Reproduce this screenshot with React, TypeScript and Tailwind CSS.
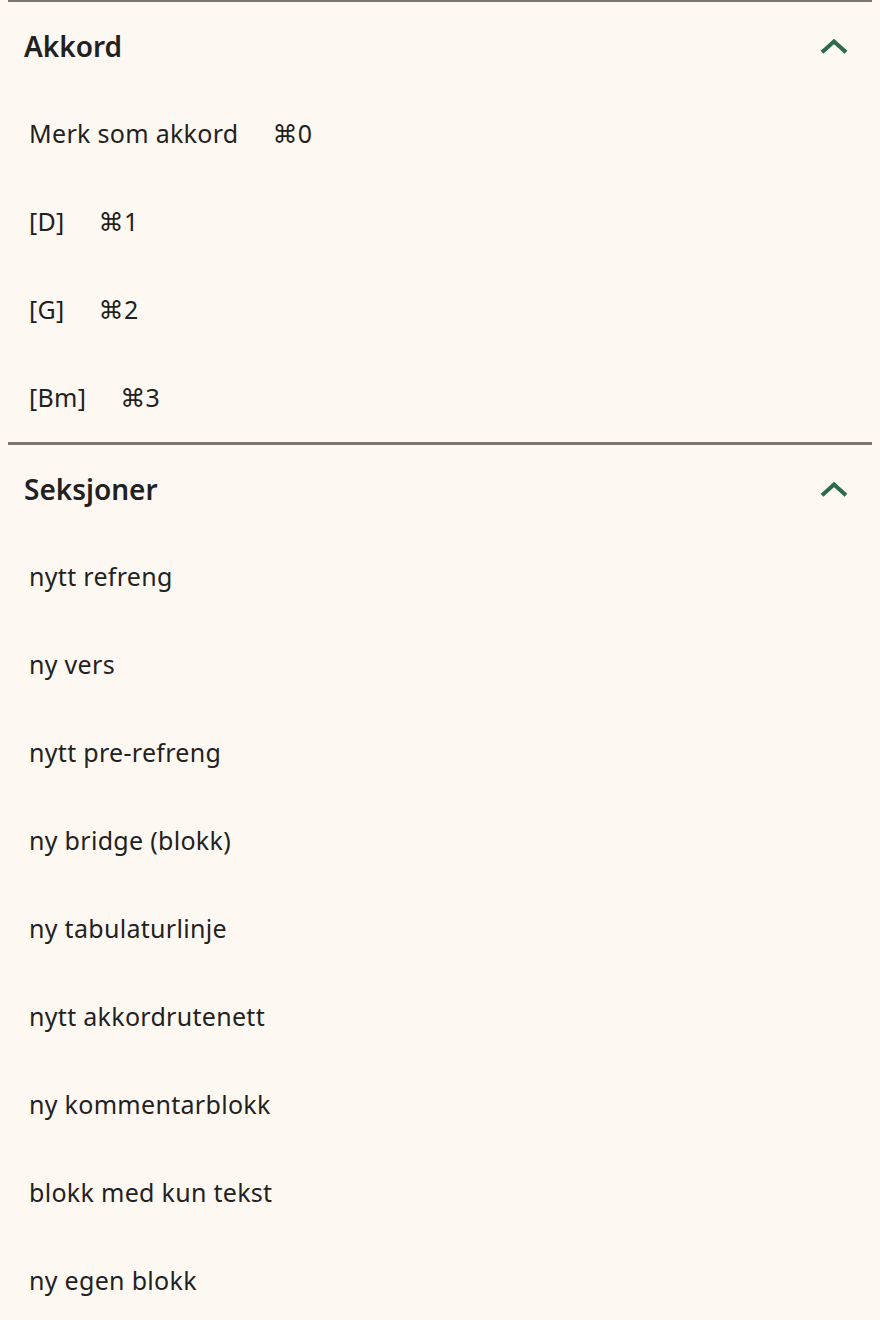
import React from "react";

const akkord: { label: string; key: string }[] = [
  { label: "Merk som akkord", key: "0" },
  { label: "[D]", key: "1" },
  { label: "[G]", key: "2" },
  { label: "[Bm]", key: "3" },
];

const seksjoner = [
  "nytt refreng",
  "ny vers",
  "nytt pre-refreng",
  "ny bridge (blokk)",
  "ny tabulaturlinje",
  "nytt akkordrutenett",
  "ny kommentarblokk",
  "blokk med kun tekst",
  "ny egen blokk",
];

function Chevron() {
  return (
    <svg width="28" height="18" viewBox="0 0 28 18" fill="none" className="text-[#2b6a4b]">
      <path d="M3.5 14 L14 4.5 L24.5 14" stroke="currentColor" strokeWidth="4" strokeLinecap="square" />
    </svg>
  );
}

function Section({ title, children }: { title: string; children: React.ReactNode }) {
  return (
    <section className="border-t-[3px] border-[#7b756e] mx-2">
      <button className="flex h-[88px] w-full items-center justify-between pl-4 pr-6 text-left">
        <span className="text-[28px] font-semibold text-[#1f221f]">{title}</span>
        <Chevron />
      </button>
      <ul>{children}</ul>
    </section>
  );
}

export default function App() {
  return (
    <div
      className="min-h-screen w-full bg-[#fef8f2] text-[#1f221f] -mt-px"
      style={{ fontFamily: '"Noto Sans", "DejaVu Sans", sans-serif' }}
    >
      <Section title="Akkord">
        {akkord.map((a) => (
          <li key={a.label} className="flex h-[88px] items-center gap-[34px] pl-[21px] text-[25px] tracking-[0.3px]">
            <span>{a.label}</span>
            <span>
              <span style={{ fontFamily: '"DejaVu Sans", sans-serif' }}>⌘</span>
              {a.key}
            </span>
          </li>
        ))}
      </Section>
      <Section title="Seksjoner">
        {seksjoner.map((s) => (
          <li key={s} className="flex h-[88px] items-center pl-[21px] text-[25px] tracking-[0.3px]">
            {s}
          </li>
        ))}
      </Section>
    </div>
  );
}
